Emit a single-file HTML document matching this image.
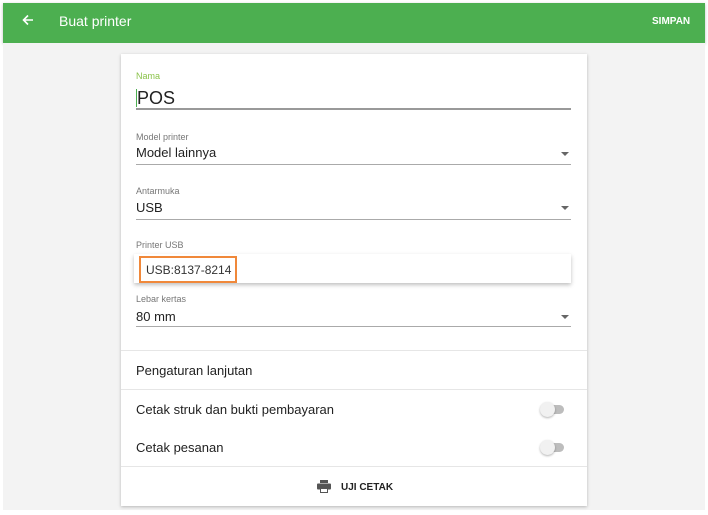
<!DOCTYPE html>
<html><head><style>
*{margin:0;padding:0;box-sizing:border-box}
body{width:708px;height:515px;background:#fff;font-family:"Liberation Sans",Arial,sans-serif;position:relative;overflow:hidden;color:#222}
.a{position:absolute}
.hdr{left:3px;top:3px;width:702px;height:40px;background:#4caf50;box-shadow:0 1px 3px rgba(0,0,0,.25)}
.bg{left:3px;top:43px;width:702px;height:467px;background:#f3f3f3}
.card{left:121px;top:54px;width:466px;height:452px;background:#fff;box-shadow:0 1px 3px rgba(0,0,0,.25)}
.lbl{font-size:9px;color:#777}
.val{font-size:13px;color:#222}
.ul{height:1px;background:#aaa;left:136px;width:435px}
.arr{width:0;height:0;border-left:4px solid transparent;border-right:4px solid transparent;border-top:4px solid #666;left:561px}
.div{left:121px;width:466px;height:1px;background:#e6e6e6}
.tg{width:23px;height:9px;border-radius:5px;background:#bdbdbd;left:541px}
.tg:after{content:"";position:absolute;left:-1px;top:-3px;width:15px;height:15px;border-radius:50%;background:#f1f1f1;box-shadow:0 1px 2px rgba(0,0,0,.3)}
</style></head><body>
<div class="a hdr"></div>
<svg class="a" style="left:22px;top:14px" width="12" height="12" viewBox="0 0 12 12"><path d="M11 6H2M6 1.5L1.5 6 6 10.5" stroke="#fff" stroke-width="1.6" fill="none"/></svg>
<div class="a" style="left:59px;top:13px;font-size:14px;color:#fff;">Buat printer</div>
<div class="a" style="left:652px;top:16px;font-size:10px;color:#fff;font-weight:bold">SIMPAN</div>
<div class="a bg"></div>
<div class="a card"></div>
<div class="a lbl" style="left:136px;top:71px;color:#8bc34a">Nama</div>
<div class="a" style="left:136px;top:89px;width:1px;height:18px;background:#4caf50"></div>
<div class="a" style="left:137px;top:88px;font-size:18px">POS</div>
<div class="a ul" style="top:108px;height:2px;background:#999"></div>
<div class="a lbl" style="left:136px;top:132px">Model printer</div>
<div class="a val" style="left:136px;top:145px">Model lainnya</div>
<div class="a arr" style="top:152px"></div>
<div class="a ul" style="top:164px"></div>
<div class="a lbl" style="left:136px;top:186px">Antarmuka</div>
<div class="a val" style="left:136px;top:200px">USB</div>
<div class="a arr" style="top:206px"></div>
<div class="a ul" style="top:219px"></div>
<div class="a lbl" style="left:136px;top:240px">Printer USB</div>
<div class="a" style="left:134px;top:254px;width:437px;height:29px;background:#fff;box-shadow:0 2px 4px rgba(0,0,0,.25)"></div>
<div class="a" style="left:139px;top:256px;width:98px;height:27px;border:2px solid #f0883a"></div>
<div class="a" style="left:146px;top:263px;font-size:12px;color:#333">USB:8137-8214</div>
<div class="a lbl" style="left:136px;top:294px">Lebar kertas</div>
<div class="a val" style="left:136px;top:309px">80 mm</div>
<div class="a arr" style="top:315px"></div>
<div class="a ul" style="top:326px"></div>
<div class="a div" style="top:350px"></div>
<div class="a val" style="left:136px;top:363px">Pengaturan lanjutan</div>
<div class="a div" style="top:389px"></div>
<div class="a val" style="left:136px;top:402px">Cetak struk dan bukti pembayaran</div>
<div class="a tg" style="top:405px"></div>
<div class="a val" style="left:136px;top:440px">Cetak pesanan</div>
<div class="a tg" style="top:443px"></div>
<div class="a div" style="top:466px"></div>
<svg class="a" style="left:317px;top:480px" width="14" height="13" viewBox="0 0 14 13"><rect x="3" y="0" width="8" height="3" fill="#555"/><rect x="0" y="3.5" width="14" height="6" rx="1" fill="#555"/><rect x="3" y="8" width="8" height="5" fill="#555"/><rect x="4" y="9" width="6" height="3" fill="#fff"/></svg>
<div class="a" style="left:341px;top:482px;font-size:10px;font-weight:bold;color:#222">UJI CETAK</div>
</body></html>
